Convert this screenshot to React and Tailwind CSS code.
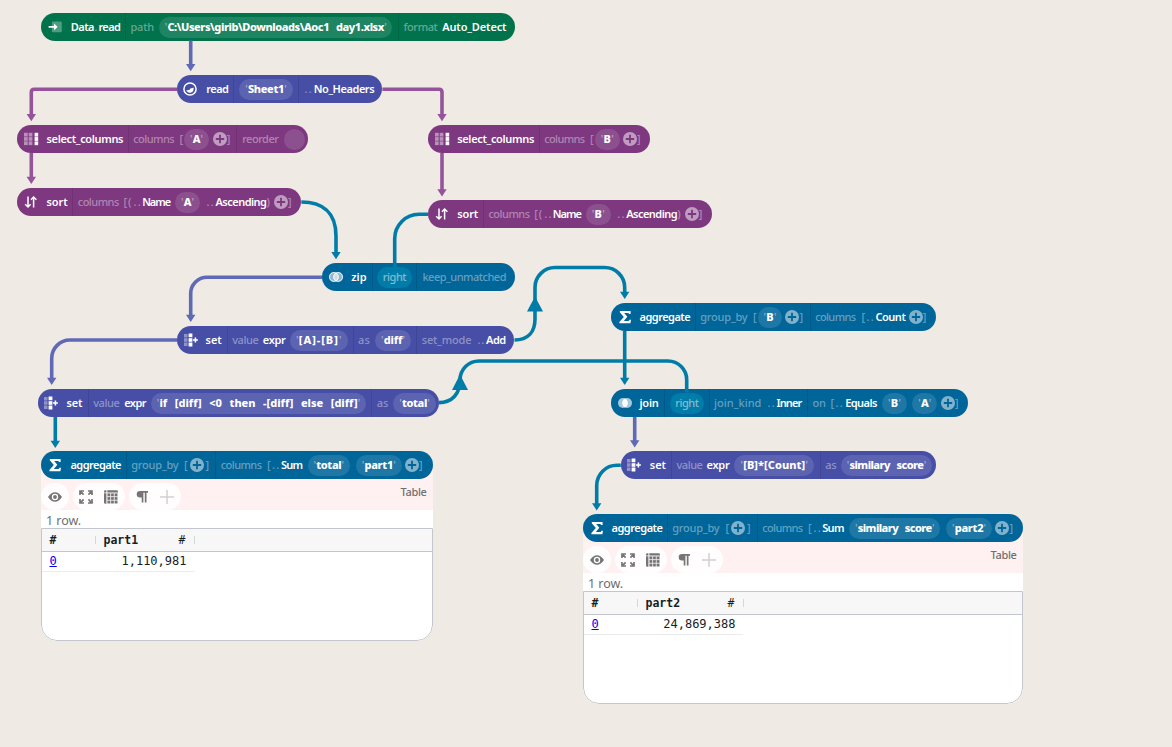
import React, { useLayoutEffect, useRef } from "react";

/* Stretches a label to the width its slot gives it. */
function Fit({ text, w, className }) {
  const ref = useRef(null);
  useLayoutEffect(() => {
    const el = ref.current;
    el.style.letterSpacing = "0px";
    const natural = el.getBoundingClientRect().width;
    el.style.letterSpacing = (w - natural) / text.length + "px";
  }, [text, w]);
  return (
    <span className={"block shrink-0 whitespace-pre " + className} style={{ width: w }}>
      <span ref={ref} className="inline-block">{text}</span>
    </span>
  );
}

const icons = {
  data: (
    <>
      <rect x="3.8" y="1.6" width="10" height="10.6" rx="1.2" fill="#fff" opacity=".3" />
      <path d="M0.6 6H6V3.6L9.6 6.9L6 10.2V7.8H0.6Z" fill="#fff" />
    </>
  ),
  read: (
    <>
      <circle cx="7" cy="7" r="6.1" fill="none" stroke="#fff" strokeWidth="1.5" />
      <path d="M3.3 8C5.5 8.6 7 7.8 7.6 6.2C9 6.4 10 5.8 10.5 5.2C11.2 8.6 9.4 10.7 7 10.7C5.2 10.7 3.8 9.8 3.3 8Z" fill="#fff" />
    </>
  ),
  cols: (
    <>
      {[0, 1, 2].map((r) => (
        <g key={r} fill="#fff">
          <rect x="0" y={0.8 + r * 4.3} width="3.7" height="3.7" opacity=".45" />
          <rect x="4.7" y={0.8 + r * 4.3} width="3.7" height="3.7" opacity=".45" />
          <rect x="10.6" y={0.8 + r * 4.3} width="3.6" height="3.8" />
        </g>
      ))}
    </>
  ),
  sort: (
    <path d="M4 1.5V12M1.2 9.2L4 12L6.6 9.2M9.6 12.5V2M7 4.8L9.6 2L12.4 4.8" fill="none" stroke="#fff" strokeWidth="1.5" />
  ),
  zip: (
    <>
      <circle cx="4.9" cy="7" r="4.9" fill="#fff" opacity=".55" />
      <circle cx="9.1" cy="7" r="4.9" fill="#fff" opacity=".55" />
      <circle cx="4.9" cy="7" r="4.4" fill="none" stroke="#fff" opacity=".8" />
      <circle cx="9.1" cy="7" r="4.4" fill="none" stroke="#fff" opacity=".8" />
    </>
  ),
  join: (
    <>
      <circle cx="4.9" cy="7" r="4.9" fill="#fff" opacity=".65" />
      <circle cx="9.1" cy="7" r="4.9" fill="#fff" opacity=".65" />
      <path d="M7 2.6A4.9 4.9 0 0 1 7 11.4A4.9 4.9 0 0 1 7 2.6Z" fill="#fff" />
    </>
  ),
  set: (
    <g fill="#fff">
      <path d="M0 1H3.5V4.5H0ZM0 5.3H3.5V8.8H0ZM0 9.6H3.5V13.1H0Z" opacity=".4" />
      <path d="M4.6 .4H8.4V4.3H4.6ZM4.6 9.6H8.4V13.6H4.6Z" />
      <path d="M4.6 5.2H8.4V8.8H4.6Z" />
      <path d="M10.6 4.6H12.2V6.2H13.9V7.8H12.2V9.4H10.6V7.8H9V6.2H10.6Z" />
    </g>
  ),
  sum: (
    <path d="M1.8 .9H12.6V4H11C10.8 3 10.4 2.9 9.6 2.9H6.2L9.3 6.8L5.8 11H10C10.9 11 11.2 10.8 11.5 9.8H13L12.4 13.2H1.4V12L5.8 7.1L1.8 2.2Z" fill="#fff" />
  ),
};

const palette = {
  green: "bg-[#00734c]",
  indigo: "bg-[#464ea6]",
  purple: "bg-[#7e3880]",
  blue: "bg-[#006599]",
};

/* Tokens: [kind, start, end, text]; t = name, d = dimmed, p = quoted value,
   r = connected port, s = separator, + = add button, c = empty port. */
const ab = (o, v) => [
  ["t", 47 + o, 67 + o, "sort"], ["s", 72.5 + o], ["d", 78.3 + o, 118.3 + o, "columns"],
  ["d", 124 + o, 132 + o, "[("], ["d", 134 + o, 141.5 + o, ".."], ["t", 142.7 + o, 169.7 + o, "Name"],
  ["p", 175 + o, 200 + o, v, 7.5], ["d", 207 + o, 214.5 + o, ".."], ["t", 216 + o, 266 + o, "Ascending"],
  ["d", 267 + o, 270 + o, ")"], ["+", 281 + o], ["d", 288.5 + o, 291.5 + o, "]"],
];

const nodes = [
  { x: 41.3, y: 12.5, r: 514.7, c: "green", i: "data", ix: 48.5, k: [
    ["t", 71.3, 93.5, "Data"], ["d", 95, 97.5, "."], ["t", 99, 119.7, "read"], ["s", 125], ["d", 131, 153.5, "path"],
    ["p", 159, 392.5, "C:\\Users\\girib\\Downloads\\Aoc1  day1.xlsx", 216.5], ["s", 398], ["d", 404, 437, "format"], ["t", 442.7, 506, "Auto_Detect"]] },
  { x: 177, y: 75.2, r: 382.4, c: "indigo", i: "read", ix: 183.4, k: [
    ["t", 206.7, 228, "read"], ["s", 233], ["p", 239, 293, "Sheet1", 36], ["s", 298], ["d", 305, 312.5, ".."], ["t", 314.3, 373.7, "No_Headers"]] },
  { x: 17.3, y: 125, r: 308, c: "purple", i: "cols", ix: 24, k: [
    ["t", 47, 122.7, "select_columns"], ["s", 128], ["d", 133.7, 173.7, "columns"], ["d", 180, 183, "["], ["p", 184, 209, "A", 7.5],
    ["+", 220], ["d", 227.3, 230.3, "]"], ["s", 236], ["d", 242.7, 278, "reorder"], ["c", 294.7]] },
  { x: 17.3, y: 188, r: 301.3, c: "purple", i: "sort", ix: 24.3, k: ab(0, "A") },
  { x: 428, y: 125, r: 650.3, c: "purple", i: "cols", ix: 434.8, k: [
    ["t", 457.7, 533.5, "select_columns"], ["s", 539], ["d", 544.7, 584, "columns"], ["d", 590.5, 593.5, "["], ["p", 594.7, 620, "B", 7.5],
    ["+", 630], ["d", 637.5, 640.5, "]"]] },
  { x: 428, y: 200.4, r: 711.7, c: "purple", i: "sort", ix: 435, k: ab(410.7, "B") },
  { x: 322, y: 263.2, r: 514.6, c: "blue", i: "zip", ix: 329, k: [
    ["t", 351.7, 366.3, "zip"], ["s", 372], ["r", 377, 412, "right", 23.3], ["s", 416], ["d", 423, 505.5, "keep_unmatched"]] },
  { x: 177, y: 325.9, r: 514.4, c: "indigo", i: "set", ix: 183.7, k: [
    ["t", 206, 221.3, "set"], ["s", 227], ["d", 232.7, 258, "value"], ["t", 263.3, 285, "expr"], ["p", 290, 347.7, "[A]-[B]", 40],
    ["s", 353], ["d", 358.7, 369.3, "as"], ["p", 375, 411, "diff", 18.5], ["s", 416], ["d", 422.3, 471, "set_mode"], ["d", 478, 485, ".."], ["t", 486.7, 505.3, "Add"]] },
  { x: 611, y: 303, r: 936, c: "blue", i: "sum", ix: 617.5, k: [
    ["t", 640, 689.7, "aggregate"], ["s", 695], ["d", 700.7, 747, "group_by"], ["d", 753.5, 756.5, "["], ["p", 758, 782, "B", 7.5], ["+", 792.3],
    ["d", 800, 803, "]"], ["s", 810], ["d", 815.7, 855, "columns"], ["d", 862, 865, "["], ["d", 867, 874.5, ".."], ["t", 876, 905, "Count"], ["+", 916], ["d", 923.4, 926.4, "]"]] },
  { x: 611, y: 388.9, r: 968.3, c: "blue", i: "join", ix: 617.5, k: [
    ["t", 640, 658, "join"], ["s", 664], ["r", 669.7, 704, "right", 23.3], ["s", 709], ["d", 714.5, 761, "join_kind"], ["d", 768, 775.5, ".."],
    ["t", 777, 801, "Inner"], ["s", 807], ["d", 813, 825, "on"], ["d", 831, 834, "["], ["d", 836, 843.5, ".."], ["t", 845.7, 876.5, "Equals"],
    ["p", 882, 907, "B", 7.5], ["p", 912, 937.5, "A", 7.5], ["+", 948], ["d", 955.5, 958.5, "]"]] },
  { x: 37.8, y: 388.9, r: 439, c: "indigo", i: "set", ix: 44.5, k: [
    ["t", 67, 82, "set"], ["s", 88], ["d", 93.7, 119, "value"], ["t", 124.7, 145.5, "expr"],
    ["p", 151, 366, "if  [diff]  <0  then  -[diff]  else  [diff]", 198], ["s", 371], ["d", 377.3, 388, "as"], ["p", 393, 436, "total", 25]] },
  { x: 41.3, y: 451.3, r: 433, c: "blue", i: "sum", ix: 48, k: [
    ["t", 71, 120.5, "aggregate"], ["s", 126], ["d", 131.7, 178, "group_by"], ["d", 184.5, 187.5, "["], ["+", 196.7], ["d", 206, 209, "]"],
    ["s", 215], ["d", 221.3, 261, "columns"], ["d", 267.5, 270.5, "["], ["d", 272.5, 280, ".."], ["t", 281.5, 302, "Sum"],
    ["p", 307.7, 350, "total", 25], ["p", 355.7, 402, "part1", 28.5], ["+", 412], ["d", 419.7, 422.7, "]"]] },
  { x: 620.8, y: 451.4, r: 936, c: "indigo", i: "set", ix: 627.5, k: [
    ["t", 650.3, 665.5, "set"], ["s", 671], ["d", 677, 702, "value"], ["t", 707, 729, "expr"], ["p", 734, 814.5, "[B]*[Count]", 62],
    ["s", 820], ["d", 825.7, 836, "as"], ["p", 841, 932, "similary  score", 74]] },
  { x: 583, y: 514.3, r: 1023, c: "blue", i: "sum", ix: 589.5, k: [
    ["t", 612, 662, "aggregate"], ["s", 667], ["d", 672.7, 719, "group_by"], ["d", 726, 729, "["], ["+", 738], ["d", 747.5, 750.5, "]"],
    ["s", 757], ["d", 762.7, 802, "columns"], ["d", 808.5, 811.5, "["], ["d", 814, 821.5, ".."], ["t", 822.7, 843.5, "Sum"],
    ["p", 849, 940.5, "similary  score", 74], ["p", 946, 992, "part2", 28.5], ["+", 1002.3], ["d", 1010, 1013, "]"]] },
];

const bounds = ([kind, a, b]) => {
  if (kind === "s") return [a, a + 1];
  if (kind === "+") return [a - 7, a + 7];
  if (kind === "c") return [a - 10.5, a + 10.5];
  if (kind === "t" || kind === "d") return [a - 0.5, b + 0.5];
  return [a, b];
};

function Token({ token, gap }) {
  const [kind, , , text, tw] = token;
  const [a, b] = bounds(token);
  const w = b - a;
  let body;
  if (kind === "s") body = <span className="block h-7 w-px bg-black/10" />;
  else if (kind === "c") body = <span className="block size-[21px] rounded-full bg-white/12" />;
  else if (kind === "+")
    body = (
      <svg viewBox="0 0 14 14" className="block size-3.5">
        <path fillRule="evenodd" fill="#fff" opacity=".5" d="M7 0A7 7 0 1 1 7 14A7 7 0 1 1 7 0ZM6.1 2.8V6.1H2.8V7.9H6.1V11.2H7.9V7.9H11.2V6.1H7.9V2.8Z" />
      </svg>
    );
  else if (kind === "p")
    body = (
      <span className="flex h-[21px] items-center justify-center rounded-full bg-white/12 pb-px">
        <span className="w-[3px] text-center font-normal text-white/50">'</span>
        <Fit text={text} w={tw} className="font-extrabold text-white [word-spacing:1px]" />
        <span className="w-[3px] text-center font-normal text-white/50">'</span>
      </span>
    );
  else if (kind === "r")
    body = (
      <span className="flex h-[21px] items-center justify-center rounded-full bg-[#007ca8] pb-px">
        <Fit text={text} w={tw} className="font-medium text-white/50" />
      </span>
    );
  else if (kind === "t") body = <Fit text={text} w={w} className="font-semibold text-white" />;
  else body = <Fit text={text} w={w} className="font-medium text-white/40" />;
  const isText = kind === "t" || kind === "d";
  return (
    <div className={isText ? "h-[13px] shrink-0" : "shrink-0"} style={{ marginLeft: gap, width: w }}>
      {body}
    </div>
  );
}

function Node({ node }) {
  let end = node.ix + 14;
  return (
    <div
      className={"absolute flex h-7 items-center rounded-full text-[11px] leading-[11px] " + palette[node.c]}
      style={{ left: node.x, top: Math.round(node.y), width: node.r - node.x }}
    >
      <svg viewBox="0 0 14 14" className="block size-3.5 shrink-0 overflow-visible" style={{ marginLeft: node.ix - node.x }}>
        {icons[node.i]}
      </svg>
      {node.k.map((t, i) => {
        const [a, b] = bounds(t);
        const gap = a - end;
        end = b;
        return <Token key={i} token={t} gap={gap} />;
      })}
    </div>
  );
}

function Toolbar() {
  return (
    <div className="flex h-[27px] gap-1 text-[#757575]">
      <div className="flex w-7 items-center justify-center rounded-full bg-[#fffdfd]">
        <svg viewBox="0 0 14 14" className="size-3.5">
          <path fillRule="evenodd" fill="currentColor" d="M0 7Q3 2.3 7 2.3T14 7Q11 11.7 7 11.7T0 7ZM7 3.8A3.2 3.2 0 1 0 7 10.2A3.2 3.2 0 1 0 7 3.8ZM7 5.1A1.9 1.9 0 1 1 7 8.9A1.9 1.9 0 1 1 7 5.1Z" />
        </svg>
      </div>
      <div className="flex w-[52px] items-center justify-center gap-[11px] rounded-full bg-[#fffdfd] pr-px">
        <svg viewBox="0 0 14 14" className="size-3.5" fill="none" stroke="currentColor" strokeWidth="1.7">
          <path d="M1 5V1H5M1.2 1.2L4.6 4.6M9 1H13V5M12.8 1.2L9.4 4.6M1 9V13H5M1.2 12.8L4.6 9.4M13 9V13H9M12.8 12.8L9.4 9.4" />
        </svg>
        <svg viewBox="0 0 14 14" className="size-3.5" fill="currentColor">
          <path d="M0 1.6A1.4 1.4 0 0 1 1.4 .2H2.4V2.4H0ZM3.3 .2H12.6A1.4 1.4 0 0 1 14 1.6V2.4H3.3ZM0 3.3H2.4V13.8H1.4A1.4 1.4 0 0 1 0 12.4Z" />
          {[0, 1, 2].map((r) => [0, 1, 2].map((c) => (
            <rect key={r + "-" + c} x={3.5 + c * 3.6} y={3.5 + r * 3.6} width="2.7" height="2.7" />
          )))}
          <path d="M3.3 3H14V13.8H3.3Z" opacity=".15" />
        </svg>
      </div>
      <div className="flex w-[52px] items-center justify-center gap-[11px] rounded-full bg-[#fffdfd] pr-[2px]">
        <svg viewBox="0 0 14 14" className="size-3.5" fill="currentColor">
          <path d="M5 1H13V2.8H11.5V12.5H9.8V2.8H8.4V12.5H6.7V7.6H5A3.3 3.3 0 0 1 5 1Z" />
        </svg>
        <svg viewBox="0 0 14 14" className="size-3.5" fill="none" stroke="#d2d0d0" strokeWidth="1.5">
          <path d="M7 0V14M0 7H14" />
        </svg>
      </div>
    </div>
  );
}

function TablePanel({ className, name, value, nameCol }) {
  return (
    <div className={"absolute flex flex-col overflow-hidden rounded-b-2xl bg-white " + className}>
      <div className="flex h-[45px] shrink-0 items-end justify-between bg-[#fff1f1] pr-[6.5px]">
        <Toolbar />
        <Fit text="Table" w={26} className="mb-[12px] text-[11px] leading-[13px] font-medium text-[#707070]" />
      </div>
      <div className="flex h-[18px] shrink-0 items-center pl-[5px] text-[12.5px] text-[#6e6e6e]">
        <Fit text="1 row." w={35} className="pt-[4px] leading-none" />
      </div>
      <div className="flex grow flex-col rounded-b-2xl border border-[#c3c6cc] font-['DejaVu_Sans_Mono',monospace] text-xs leading-none text-[#181d1f]">
        <div className="flex h-[23px] shrink-0 items-center border-b border-[#c3c6cc] bg-[#f7f7f7] text-[11.5px] font-bold">
          <span className="w-[53px] pt-[2px] pl-[7.5px]">#</span>
          <span className="h-2 w-px bg-[#d4d6dc]" />
          <span className={"flex items-baseline justify-between pt-[2px] pr-[8.5px] pl-[7.5px] " + nameCol}>
            <span>{name}</span>
            <span className="font-normal">#</span>
          </span>
          <span className="h-2 w-px bg-[#d4d6dc]" />
        </div>
        <div className="flex">
          <div className="flex h-[20px] items-center border-b border-[#ececec] pb-[2px]">
            <span className="w-[53px] pl-[7.5px] text-[#0000ee] underline">0</span>
            <span className={"pr-[6.5px] text-right " + nameCol}>{value}</span>
            <span className="w-px" />
          </div>
        </div>
      </div>
    </div>
  );
}

const arrows = [
  ["#5f69b5", "M190.7 40.5V66", 190.7, 71.3],
  ["#94539a", "M177 89.3H34.3Q31.3 89.3 31.3 92.3V116", 31.3, 121.3],
  ["#94539a", "M382.4 89.3H439Q442 89.3 442 92.3V116", 442, 121.3],
  ["#94539a", "M31.3 153V179", 31.3, 184],
  ["#94539a", "M442 153V191", 442, 196.5],
  ["#007ca8", "M301.3 202C322 202 336 212 336 236V254", 336, 259.3],
  ["#5f69b5", "M322 277.3H207A16.3 16.3 0 0 0 190.7 293.6V316", 190.7, 322],
  ["#5f69b5", "M177 340H70A18.3 18.3 0 0 0 51.7 358.3V380", 51.7, 385],
  ["#007ca8", "M514.5 340C528 340 535 332 535 319V287.5A20 20 0 0 1 555 267.5H604.7A20 20 0 0 1 624.7 287.5V294", 624.7, 299],
  ["#007ca8", "M624.7 331V380", 624.7, 385],
  ["#5f69b5", "M634.7 417V442", 634.7, 447.5],
  ["#007ca8", "M620.8 465.3H617A20.3 20.3 0 0 0 596.7 485.6V505", 596.7, 510.5],
  ["#007ca8", "M55.3 417V443", 55.3, 448],
];

function Edges() {
  return (
    <svg viewBox="0 0 1172 747" className="absolute inset-0 h-[747px] w-[1172px]" fill="none">
      {arrows.map(([color, d, x, y], i) => (
        <g key={i}>
          <path d={d} stroke={color} strokeWidth="3.6" />
          <path d={`M${x - 4.7} ${y - 7.3}H${x + 4.7}L${x} ${y}Z`} fill={color} />
        </g>
      ))}
      <path d="M428 214.3H419A24.3 24.3 0 0 0 394.7 238.6V267.5" stroke="#007ca8" strokeWidth="3.6" />
      <path d="M439 402.6C452 402.6 460 394 460 380A19 19 0 0 1 479 361H668A18.7 18.7 0 0 1 686.7 379.7V392.5" stroke="#007ca8" strokeWidth="3.6" />
      <path d="M535 296.5L543 311.5H527Z" fill="#007ca8" />
      <path d="M460 374.5L468 390H452Z" fill="#007ca8" />
    </svg>
  );
}

export default function App() {
  return (
    <div className="relative h-[747px] w-[1172px] overflow-hidden bg-[#efeae4] font-['Noto_Sans',sans-serif]">
      <TablePanel className="top-[465px] left-[41px] h-[176px] w-[392px]" name="part1" value="1,110,981" nameCol="w-[98px]" />
      <TablePanel className="top-[528px] left-[583px] h-[176px] w-[440px]" name="part2" value="24,869,388" nameCol="w-[105px]" />
      {nodes.map((n, i) => <Node key={i} node={n} />)}
      <Edges />
    </div>
  );
}
